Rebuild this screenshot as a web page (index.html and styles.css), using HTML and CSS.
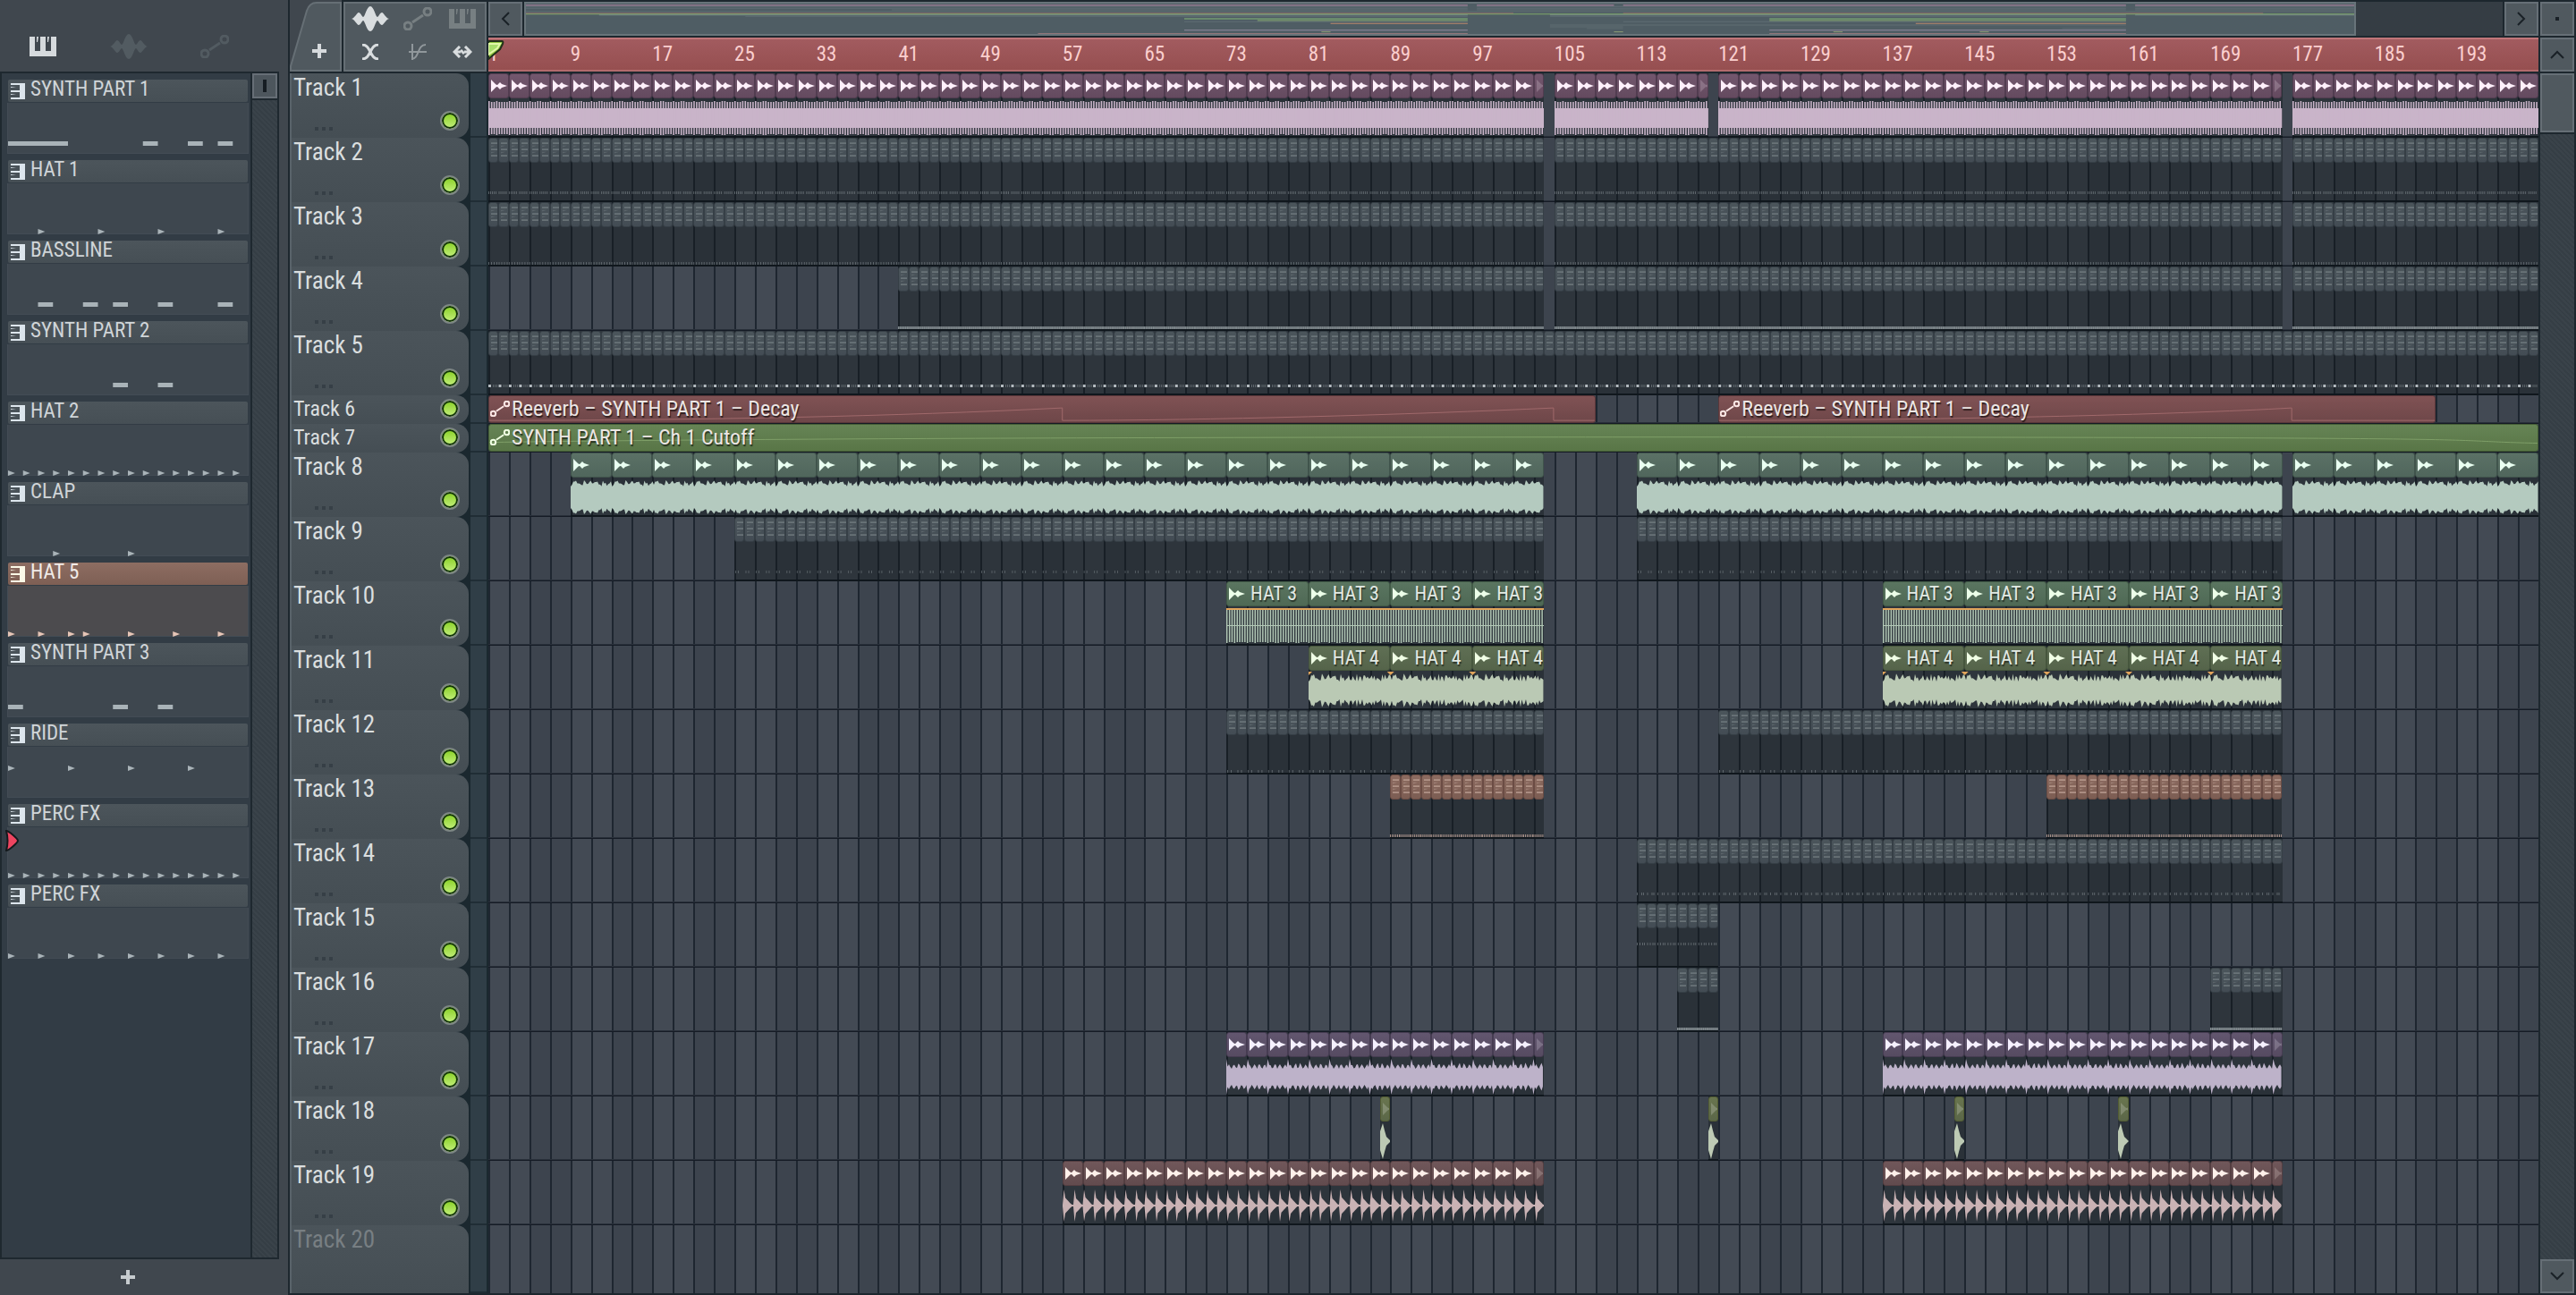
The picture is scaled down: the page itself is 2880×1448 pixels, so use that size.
FILE: index.html
```html
<!DOCTYPE html>
<html lang="en">
<head>
<meta charset="utf-8">
<title>Playlist</title>
<link rel="stylesheet" href="styles.css">
</head>
<body>
<svg class="symbols" aria-hidden="true">
  <symbol id="i-piano" viewBox="0 0 30 22"><path d="M0 0H6V16H12V0H18V16H24V0H30V22H0ZM8 0h2l-1 6h-1zM20 0h2l-1 6h-1z"/></symbol>
  <symbol id="i-keys" viewBox="0 0 16 18"><path d="M0 0H16V18H0V16H10V10H0V8H10V2H0ZM0 4l6 1H0zM0 12l6 1H0z"/></symbol>
  <symbol id="i-wave" viewBox="0 0 42 28"><path d="M0 14C4 13 6 7 8 7S12 12 13 12C15 12 17 0 21 0S27 12 29 12C30 12 32 7 34 7S38 13 42 14C38 15 36 21 34 21S30 16 29 16C27 16 25 28 21 28S15 16 13 16C12 16 10 21 8 21S4 15 0 14Z"/></symbol>
  <symbol id="i-link" viewBox="0 0 32 26"><g fill="none" stroke="currentColor" stroke-width="3"><circle cx="5" cy="21" r="4"/><circle cx="27" cy="5" r="4"/><path d="M10 17L22 9"/></g></symbol>
  <symbol id="i-plus" viewBox="0 0 16 16"><path d="M6 0h4v6h6v4h-6v6H6v-6H0V6h6z"/></symbol>
  <symbol id="i-cross" viewBox="0 0 20 18"><path d="M1 1C6 1 8 5 10 9S14 17 19 17M19 1C14 1 12 5 10 9S6 17 1 17" fill="none" stroke="currentColor" stroke-width="3"/></symbol>
  <symbol id="i-curve" viewBox="0 0 20 18"><path d="M4 0V18M0 9H20M3 17C12 17 9 1 19 1" fill="none" stroke="currentColor" stroke-width="2"/></symbol>
  <symbol id="i-stretch" viewBox="0 0 22 14"><path d="M8 1L2 7l6 6M14 1l6 6-6 6M3 7h6M13 7h6M9 5l4 4" fill="none" stroke="currentColor" stroke-width="3"/></symbol>
  <symbol id="i-left" viewBox="0 0 10 16"><path d="M9 1L2 8l7 7" fill="none" stroke="currentColor" stroke-width="2"/></symbol>
  <symbol id="i-right" viewBox="0 0 10 16"><path d="M1 1l7 7-7 7" fill="none" stroke="currentColor" stroke-width="2"/></symbol>
  <symbol id="i-up" viewBox="0 0 16 10"><path d="M1 9l7-7 7 7" fill="none" stroke="currentColor" stroke-width="2"/></symbol>
  <symbol id="i-down" viewBox="0 0 16 10"><path d="M1 1l7 7 7-7" fill="none" stroke="currentColor" stroke-width="2"/></symbol>
  <symbol id="i-audio" viewBox="0 0 18 14"><path d="M0 0L5 5Q7 7 8 5L10 3 12 5 18 7 12 9 10 11 8 9Q7 7 5 9L0 14Z"/></symbol>
  <symbol id="i-pattern" viewBox="0 0 8 20"><path d="M0 0h8v2H0zM0 8h8v2H0zM0 16h8v2H0z"/><path d="M0 4h6l-6 2zM0 12h6l-6 2z" opacity=".6"/></symbol>
</svg>
<div class="app">
  <aside class="picker">
    <div class="picker-tabs">
      <button class="on" aria-label="Patterns"><svg width="30" height="22"><use href="#i-piano"/></svg></button>
      <button aria-label="Audio clips"><svg width="42" height="28"><use href="#i-wave"/></svg></button>
      <button aria-label="Automation clips"><svg width="32" height="26"><use href="#i-link"/></svg></button>
    </div>
    <div class="picker-frame">
      <ul class="picker-list" id="patterns"></ul>
      <div class="picker-scroll hatch"><button aria-label="Scroll patterns"><i></i></button></div>
    </div>
    <button class="picker-add" aria-label="Add pattern"><svg width="16" height="16"><use href="#i-plus"/></svg></button>
  </aside>
  <main class="playlist">
    <div class="top">
      <div class="corner">
        <button class="add-track" aria-label="Add track">
          <svg class="tab-shape" width="60" height="80"><path d="M1 79V74L19 12Q22 3 30 3H57V79Z" fill="#50595f" stroke="#666f75" stroke-width="2"/></svg>
          <svg class="plus" width="16" height="16"><use href="#i-plus"/></svg>
        </button>
        <div class="tools">
          <button class="on" aria-label="Audio"><svg width="42" height="28"><use href="#i-wave"/></svg></button>
          <button aria-label="Automation"><svg width="32" height="26"><use href="#i-link"/></svg></button>
          <button aria-label="Patterns"><svg width="30" height="22"><use href="#i-piano"/></svg></button>
          <button class="on" aria-label="Crossfade"><svg width="20" height="18"><use href="#i-cross"/></svg></button>
          <button class="half" aria-label="Curve"><svg width="20" height="18"><use href="#i-curve"/></svg></button>
          <button class="on" aria-label="Stretch"><svg width="22" height="14"><use href="#i-stretch"/></svg></button>
        </div>
      </div>
      <div class="head">
        <div class="overview">
          <button class="box" aria-label="Scroll left"><svg width="10" height="16"><use href="#i-left"/></svg></button>
          <div class="overview-track">
            <div class="overview-view"><svg id="overview" viewBox="0 0 200 36" preserveAspectRatio="none"></svg></div>
            <div class="overview-rest"></div>
          </div>
          <button class="box" aria-label="Scroll right"><svg width="10" height="16"><use href="#i-right"/></svg></button>
        </div>
        <div class="ruler" id="ruler">
          <svg class="playhead" width="18" height="22"><path d="M0 1H15Q17 1 16 4L13 10 0 21Z" fill="#8ec63f" stroke="#22301a" stroke-width="2"/><path d="M0 4H13L10 9 0 16Z" fill="#a9de6c" stroke="#e2f7a8" stroke-width="2"/></svg>
        </div>
      </div>
      <div class="side">
        <button class="box" aria-label="Menu"><i></i></button>
        <button class="box" aria-label="Scroll up"><svg width="16" height="10"><use href="#i-up"/></svg></button>
      </div>
    </div>
    <div class="bottom">
      <div class="tracks" id="tracks"></div>
      <div class="vscroll hatch">
        <button class="box thumb" aria-label="Scroll tracks"></button>
        <button class="box" aria-label="Scroll down"><svg width="16" height="10"><use href="#i-down"/></svg></button>
      </div>
    </div>
  </main>
</div>
<script src="playlist.js"></script>
</body>
</html>
```
FILE: styles.css
```css
* { box-sizing: border-box; }
body {
  margin: 0;
  background: #40474e;
  color: #d3d8db;
  font: 24px/28px "Roboto Condensed", "Liberation Sans Narrow", "Liberation Sans", sans-serif;
}
button { margin: 0; padding: 0; border: 0; background: none; color: inherit; font: inherit; display: flex; align-items: center; justify-content: center; }
svg { fill: currentColor; display: block; }
.symbols { display: none; }
.app { display: flex; min-height: 100vh; }
.hatch { background: repeating-linear-gradient(45deg, #353e45 0 2px, #3a434a 2px 4px); }

/* pattern picker */
.picker { width: 322px; flex: none; display: flex; flex-direction: column; }
.picker-tabs { height: 80px; display: grid; grid-template-columns: repeat(3, 92px); padding: 24px 0 0 2px; column-gap: 4px; color: #525b61; }
.picker-tabs .on { color: #d6dadd; }
.picker-frame { flex: 1; width: 312px; display: flex; border: 2px solid #1e282f; background: #323c45; }
.picker-list { flex: 1; list-style: none; margin: 0; padding: 7px 2px 0 6px; display: flex; flex-direction: column; gap: 7px; }
.picker-scroll { width: 30px; border-left: 2px solid #1e282f; }
.picker-scroll button { width: 28px; height: 28px; border: 2px solid #666e76; background: #4d565d; outline: 2px solid #1e282f; }
.picker-scroll i { width: 4px; height: 14px; background: #161d23; }
.picker-add { height: 40px; color: #c6cbce; padding-right: 36px; }
.pattern-name { height: 25px; margin: 0 1px 1px; padding-left: 3px; display: flex; align-items: center; gap: 6px; font-size: 23px; line-height: 21px; color: #d0d5d8; background: linear-gradient(#4c555b, #464f55); border-radius: 2px; }
.pattern-name svg { color: #dce5ec; }
.pattern-name span { white-space: nowrap; height: 25px; }
.pattern-body { height: 57px; background: #3e474f; border: 1px solid #434c55; border-top: 0; color: #a9b3b8; }
.pattern-body svg { width: 100%; height: 57px; overflow: visible; }
.selected .pattern-name { background: linear-gradient(#8d6d62, #7e5f54); color: #f0ebe8; }
.selected .pattern-name svg { color: #fbf8e6; }
.selected .pattern-body { background: #4c4b4e; color: #e6c5b6; }
.pattern { position: relative; }
.marker { position: absolute; left: -2px; top: 29px; }

/* playlist frame */
.playlist { flex: 1; min-width: 0; display: flex; flex-direction: column; border: solid #1d272e; border-width: 0 0 2px 2px; }
.top { display: flex; height: 82px; border-bottom: 2px solid #1d272e; }
.corner { width: 222px; flex: none; display: flex; gap: 0; }
.add-track { position: relative; width: 60px; height: 80px; }
.tab-shape { position: absolute; left: 0; top: 0; }
.plus { position: relative; color: #d6dadd; top: 17px; left: 3px; }
.tools { width: 160px; margin-top: 2px; border: 2px solid #666f75; background: #50595f; display: grid; grid-template-columns: 56px 50px 50px; grid-template-rows: 34px 40px; box-shadow: 0 0 0 2px #1d272e; color: #777f82; padding-bottom: 2px; }
.tools .on { color: #d9dddf; }
.tools .half { color: #90979b; }
.head { flex: 1; min-width: 0; }
.overview { height: 42px; padding: 2px 0; display: flex; gap: 2px; background: #1d272e; }
.box { width: 38px; height: 38px; flex: none; border: 2px solid #666f76; background: #50595f; color: #1a2127; }
.box i { width: 4px; height: 4px; background: #1a2127; }
.overview-track { flex: 1; display: flex; background: #353d44; }
.overview-view { flex: 25; border: 2px solid #68747a; background: #4f5d64; }
.overview-view svg { width: 100%; height: 34px; }
.overview-rest { flex: 2; }
.ruler { position: relative; height: 38px; display: grid; grid-template-columns: repeat(25, minmax(0, 1fr)); align-items: center; background: linear-gradient(#a25b5f, #964f50); border-top: 2px solid #c07679; border-bottom: 2px solid #b36b6d; color: #fbcfce; font-size: 23px; }
.playhead { position: absolute; left: 0; top: 1px; }
.side { width: 42px; flex: none; padding: 2px 2px 0; display: flex; flex-direction: column; gap: 2px; background: #1d272e; }

/* tracks */
.bottom { flex: 1; display: flex; }
.tracks { flex: 1; min-width: 0; display: flex; flex-direction: column; }
.vscroll { width: 42px; flex: none; display: flex; flex-direction: column; justify-content: space-between; border: solid #1d272e; border-width: 0 2px; }
.vscroll .thumb { height: 66px; outline: 2px solid #1d272e; }
.track { display: flex; height: 72px; background: #1b282f; }
.track.small { height: 32px; }
.track.last { flex: 1; min-height: 76px; }
.track-head { width: 200px; flex: none; display: grid; grid-template-columns: 1fr 22px; align-content: space-between; align-items: end; padding: 6px 10px 8px 2px; border-left: 2px solid #59636a; border-radius: 0 14px 14px 0; background: linear-gradient(#4b545a, #454e54); color: #dadedf; font-size: 27px; }
.track-gutter { width: 22px; flex: none; border: solid #1b282f; border-width: 0 2px; background: #303e47; box-shadow: inset 0 -2px #202d35; }
.track-name { grid-column: 1 / 3; line-height: 20px; white-space: nowrap; }
.dots { width: 20px; height: 4px; margin-left: 24px; background: repeating-linear-gradient(90deg, #363f46 0 4px, transparent 4px 8px); }
.led { appearance: none; margin: 0; width: 22px; height: 22px; border: 2px solid #7d8684; border-radius: 50%; background: linear-gradient(#86cf22, #c6f080); box-shadow: inset 0 0 0 2px #12330a; }
.small .track-head { align-content: center; align-items: center; padding-top: 0; padding-bottom: 2px; font-size: 24px; }
.small .track-name { grid-column: 1; }
.last .track-head { align-content: start; border-radius: 0 14px 0 0; color: #787f83; }
.lane {
  flex: 1; min-width: 0; display: grid; grid-template-columns: repeat(200, minmax(0, 1fr));
  background: repeating-linear-gradient(90deg, #1e2630 0 2px, transparent 2px 1%), repeating-linear-gradient(90deg, #434a54 0 2%, #3d444e 2% 4%);
  box-shadow: inset 0 -1px #151b25, inset 0 -2px #29303a;
}
.last .lane { box-shadow: none; }
.run { grid-row: 1; min-width: 0; height: 72px; background: rgba(14, 22, 25, .4); border-bottom: 2px solid #10171d; overflow: hidden; }
.clips { display: grid; height: 29px; }
.clip { min-width: 0; height: 28px; overflow: hidden; display: flex; align-items: center; gap: 6px; padding: 0 0 1px 2px; border: 1px solid var(--edge); border-radius: 3px; background: var(--head); color: #e2e9e3; font-size: 22px; white-space: nowrap; text-shadow: 1px 2px 1px rgba(0, 0, 0, .5); }
.clip svg { flex: none; color: var(--ink); }
.clip.cut svg { opacity: .2; }
.run > svg { width: 100%; height: 42px; color: var(--wave); }
.pattern-run .clip { padding-left: 2px; }
.pattern-run .clip svg { opacity: .8; }
.t-grey { --head: linear-gradient(#4b555b, #434c54); --edge: #363f46; --ink: #727c80; --wave: #80898d; }
.t-rust { --head: linear-gradient(#8c6b60, #7c5d53); --edge: #6b4c44; --ink: #bb9e92; --wave: #b59a90; }
.t-plum { --head: linear-gradient(#73576e, #644a5f); --edge: #523c50; --ink: #fff0fb; --wave: #c9b4c9; }
.t-teal { --head: linear-gradient(#5b7166, #50665c); --edge: #40544c; --ink: #e9fff1; --wave: #b4cabf; }
.t-green { --head: linear-gradient(#5a7560, #4f6955); --edge: #425b47; --ink: #ecffe9; --wave: #b2c8b6; }
.t-olive { --head: linear-gradient(#5f6f54, #55644a); --edge: #46563d; --ink: #f0ffe5; --wave: #bac9b4; }
.t-violet { --head: linear-gradient(#62566f, #564b61); --edge: #463c52; --ink: #f5f0ff; --wave: #bdb2c9; }
.t-moss { --head: linear-gradient(#69754f, #5b6748); --edge: #535d33; --ink: #fff; --wave: #bdcab4; }
.t-brown { --head: linear-gradient(#70575a, #624b4e); --edge: #543e41; --ink: #fff0ea; --wave: #c9b2b4; }
.auto-run { grid-row: 1; min-width: 0; height: 31px; position: relative; display: flex; align-items: center; gap: 2px; padding: 0 0 2px 1px; border: 1px solid var(--edge); border-radius: 3px; color: #ece6e4; white-space: nowrap; background: var(--head); text-shadow: 1px 2px 1px rgba(0, 0, 0, .6); }
.auto-run.red { --head: linear-gradient(#805254, #6e4749); --edge: #5a373a; --line: #a0696b; --ink: #fbe6e4; }
.auto-run.lime { --head: linear-gradient(#668455, #597647); --edge: #455e36; --line: #7f9f68; --ink: #efffe2; }
.auto-run .icon { flex: none; color: var(--ink); position: relative; }
.auto-run span { position: relative; }
.auto-run .env { position: absolute; inset: 0; width: 100%; height: 100%; fill: none; stroke: var(--line); }
```
FILE: playlist.js
```js
const icon = (name, w, h, cls = '') =>
  `<svg class="${cls}" width="${w}" height="${h}"><use href="#i-${name}"/></svg>`;

/* ---- pattern picker: notes are [step, length], hits are steps of 16 ---- */
const even = (n, from = 0) => Array.from({ length: 16 / n }, (_, i) => from + i * n);
const patterns = [
  { name: 'SYNTH PART 1', notes: [[0, 4], [9, 1], [12, 1], [14, 1]] },
  { name: 'HAT 1', hits: even(4, 2) },
  { name: 'BASSLINE', notes: [[2, 1], [5, 1], [7, 1], [10, 1], [14, 1]] },
  { name: 'SYNTH PART 2', notes: [[7, 1], [10, 1]] },
  { name: 'HAT 2', hits: even(1) },
  { name: 'CLAP', hits: [3, 8] },
  { name: 'HAT 5', hits: [0, 2, 4, 5, 8, 11, 14], selected: true },
  { name: 'SYNTH PART 3', notes: [[0, 1], [7, 1], [10, 1]] },
  { name: 'RIDE', hits: even(4), y: 24 },
  { name: 'PERC FX', hits: even(1), marker: true },
  { name: 'PERC FX', hits: even(2) }
];
document.getElementById('patterns').innerHTML = patterns.map(p => {
  const y = p.y || 54;
  const d = p.notes
    ? p.notes.map(([s, n]) => `M${s * 17} 43h${n * 17}v5h${-n * 17}z`).join('')
    : p.hits.map(s => `M${s * 17} ${y - 3}l8 3-8 3z`).join('');
  const mark = p.marker
    ? '<svg class="marker" width="16" height="24"><path d="M1 1C4 1 14 10 14 12S4 23 1 23Q4 12 1 1Z" fill="#ee4560" stroke="#14191d" stroke-width="2"/></svg>' : '';
  return `<li class="pattern${p.selected ? ' selected' : ''}"><div class="pattern-name">${icon('keys', 16, 18)}<span>${p.name}</span></div>` +
    `<div class="pattern-body"><svg viewBox="0 0 272 57" preserveAspectRatio="none"><path d="${d}"/></svg></div>${mark}</li>`;
}).join('');

/* ---- ruler: a number every eight bars ---- */
document.getElementById('ruler').insertAdjacentHTML('beforeend',
  Array.from({ length: 25 }, (_, i) => `<span>${i * 8 + 1}</span>`).join(''));

/* ---- tracks: runs are [first bar, end bar] counted from 0 ---- */
const all = [[0, 103], [104, 175], [176, 200]];
const late = [[72, 103], [136, 175]];
const tracks = [
  { tone: 'plum', step: 2, wave: 'comb', runs: [[0, 103], [104, 119], [120, 175], [176, 200]] },
  { tone: 'grey', ticks: [31, [0, 2, 4, 6, 8], .6], runs: all },
  { tone: 'grey', ticks: [38, [0, 3, 6, 9], .6], runs: all },
  { tone: 'grey', ticks: [38, [0, 2, 4, 6, 8, 10], 1, 'dense'], runs: [[40, 103], [104, 175], [176, 200]] },
  { tone: 'grey', ticks: [31, [5, 7, 9], .6, 'dot'], runs: [[0, 200]] },
  { small: true, auto: 'red', label: 'Reeverb – SYNTH PART 1 – Decay', runs: [[0, 108], [120, 190]],
    env: ['M0 29C20 29 40 24 56 14V29C70 29 90 22 104 14V29H108', 'M0 29C20 29 45 22 56 14V29H70'] },
  { small: true, auto: 'lime', label: 'SYNTH PART 1 – Ch 1 Cutoff', runs: [[0, 200]], env: ['M0 21C30 15 100 14 150 15S190 19 200 22'] },
  { tone: 'teal', step: 4, wave: 'noise', runs: [[8, 103], [112, 175], [176, 200]] },
  { tone: 'grey', ticks: [31, [1, 4], .5], runs: [[24, 103], [112, 175]] },
  { tone: 'green', step: 8, wave: 'lines', label: 'HAT 3', runs: late },
  { tone: 'olive', step: 8, wave: 'rough', label: 'HAT 4', runs: [[80, 103], [136, 175]] },
  { tone: 'grey', ticks: [38, [1, 5], .6], runs: [[72, 103], [120, 175]] },
  { tone: 'rust', ticks: [38, [0, 2, 4, 6, 8, 10], .9], runs: [[88, 103], [152, 175]] },
  { tone: 'grey', ticks: [31, [0, 5, 7], .6], runs: [[112, 175]] },
  { tone: 'grey', ticks: [15, [0, 3, 6, 8], .6], runs: [[112, 120]] },
  { tone: 'grey', ticks: [38, [0, 2, 4, 6, 8, 10], 1, 'dense'], runs: [[116, 120], [168, 175]] },
  { tone: 'violet', step: 2, wave: 'pulse', runs: late },
  { tone: 'moss', step: 1, wave: 'burst', runs: [[87, 88], [119, 120], [143, 144], [159, 160]] },
  { tone: 'brown', step: 2, wave: 'decay', runs: [[56, 103], [136, 175]] },
  { last: true, runs: [] }
];

const BAR = 11.46;
const noise = i => { const v = Math.sin(i * 127.1) * 43758.5; return v - Math.floor(v); };

/* height of the waveform at x pixels from the start of the run */
const shapes = {
  noise: x => 12 + 7 * noise(Math.round((x % 45.8) / 1.5)),
  rough: x => 10 + 9 * Math.pow(noise(Math.round((x % 91.7) / 1.5)), 1.3),
  pulse: x => { const t = x % 22.9; return t < 1.5 ? 20 : 9 + 7 * Math.pow(Math.abs(Math.sin(t * .55)), 2) * (t > 9 && t < 14 ? 1 : .7); },
  decay: x => { const t = x % BAR; return t < 1 ? 1 : t < 2.5 ? 18 : Math.max(1, 12 * (1 - t / 11)); }
};
function bars(w, pitch, width, top) {
  let d = '';
  for (let x = 0; x < w; x += pitch) {
    const h = top - Math.round(noise(Math.round(x % 22.9)));
    d += `M${x.toFixed(1)} ${21 - h}h${width}v${h * 2}h-${width}z`;
  }
  return d;
}
function wave(kind, w) {
  if (kind === 'burst') return '<path d="M0 10L3 1 5 9 7 16 12 21 7 26 5 33 3 41 0 31Z"/>';
  if (kind === 'comb') return `<path d="M0 10H${w}V32H0z"/><path d="${bars(w, 2.865, 1.6, 19)}"/>`;
  if (kind === 'lines') {
    return `<path d="${bars(w, 2.865, 1.5, 19)}"/><path d="M0 20H${w}v1H0z"/><path fill="#e0a45b" d="M0 1H${w}v2H0z"/>`;
  }
  const top = [], low = [];
  for (let x = 0; x <= w; x += 1.5) {
    const h = shapes[kind](x);
    top.push(`${x} ${(21 - h).toFixed(1)}`);
    low.unshift(`${x} ${(21 + h).toFixed(1)}`);
  }
  let extra = '';
  if (kind === 'rough') for (let x = 0; x < w; x += 91.68) extra += `<path fill="#e0a45b" d="M${x - 4} 0h8l-4 4z"/>`;
  return `<path d="M${top.join('L')}L${low.join('L')}Z"/>${extra}`;
}
function ticks([y, at, opacity, mode], count) {
  let d = '', dots = '';
  for (let b = 0; b < count; b++) {
    at.forEach(x => { d += `M${(b * BAR + x).toFixed(1)} ${y}h1v3h-1z`; });
    if (mode === 'dot') dots += `M${(b * BAR).toFixed(1)} ${y}h3v3h-3z`;
  }
  if (mode === 'dense') dots = `M0 ${y}H${count * BAR}v3H0z`;
  return `<path opacity="${opacity}" d="${d}"/><path d="${dots}" ${mode === 'dense' ? 'opacity=".7"' : 'fill="#b4bbc0"'}/>`;
}
function run(t, [from, to], i) {
  const place = `style="grid-column:${from + 1}/${to + 1}"`;
  const count = to - from, w = (count * BAR).toFixed(1);
  if (t.auto) {
    return `<div class="auto-run ${t.auto}" ${place}><svg class="env" viewBox="0 0 ${count} 31" preserveAspectRatio="none"><path vector-effect="non-scaling-stroke" d="${t.env[i]}"/></svg>` +
      `${icon('link', 22, 18, 'icon')}<span>${t.label}</span></div>`;
  }
  const step = t.step || 1;
  let clips = '';
  for (let b = 0; b < count; b += step) {
    const n = Math.min(step, count - b);
    clips += `<div class="clip${t.step && n === 1 ? ' cut' : ''}" style="grid-column:span ${n}">` +
      (t.step ? icon('audio', 18, 14) : icon('pattern', 7, 20)) + (t.label ? `<span>${t.label}</span>` : '') + '</div>';
  }
  return `<div class="run t-${t.tone}${t.step ? '' : ' pattern-run'}" ${place}>` +
    `<div class="clips" style="grid-template-columns:repeat(${count},minmax(0,1fr))">${clips}</div>` +
    `<svg viewBox="0 0 ${w} 42" preserveAspectRatio="none">${t.wave ? wave(t.wave, +w) : ticks(t.ticks, count)}</svg></div>`;
}
document.getElementById('tracks').innerHTML = tracks.map((t, i) => {
  const name = `Track ${i + 1}`;
  const led = t.last ? '' : `${t.small ? '' : '<div class="dots"></div>'}<input class="led" type="checkbox" checked aria-label="${name} on">`;
  return `<section class="track${t.small ? ' small' : ''}${t.last ? ' last' : ''}">` +
    `<div class="track-head"><span class="track-name">${name}</span>${led}</div><div class="track-gutter"></div>` +
    `<div class="lane">${t.runs.map((r, n) => run(t, r, n)).join('')}</div></section>`;
}).join('');

/* ---- overview strip: the same runs, one thin line per track ---- */
const tint = { plum: '#93798f', grey: '#6b787e', teal: '#7d9488', green: '#6b8f6e', olive: '#74906b', rust: '#c98f6d', violet: '#9a8fa6', moss: '#98a878', brown: '#97797c', red: '#b06a6c', lime: '#86b36a' };
let y = 1;
document.getElementById('overview').innerHTML = tracks.map(t => {
  const h = t.small ? 1 : 2;
  const key = t.auto || t.tone;
  const thick = t.step === 8 || key === 'plum' ? 2 : 1;
  const out = t.runs.map(([a, b]) => `<path fill="${tint[key]}" opacity="${key === 'grey' ? .6 : .9}" d="M${a} ${y}H${b}v${thick}H${a}z"/>`).join('');
  y += h;
  return out;
}).join('');
```
